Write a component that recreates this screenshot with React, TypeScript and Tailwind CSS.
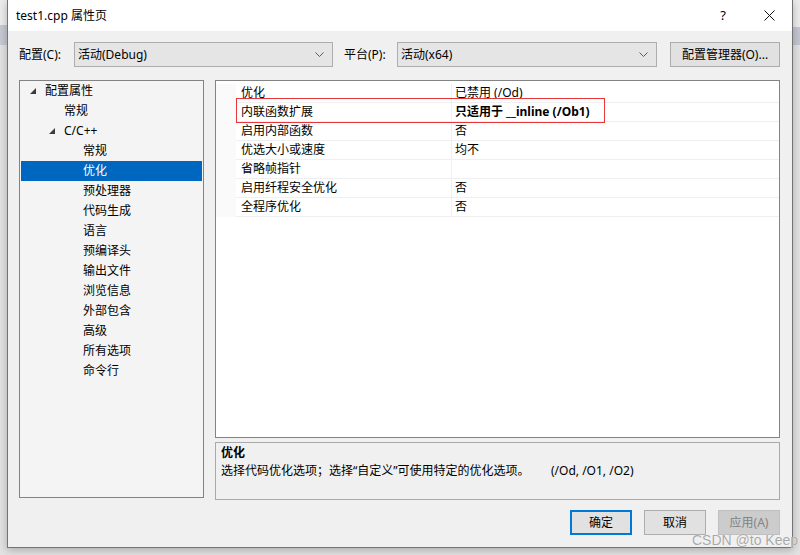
import React from 'react';

const treeItems = [
  { label: '配置属性', level: 0, arrow: true },
  { label: '常规', level: 1 },
  { label: 'C/C++', level: 1, arrow: true },
  { label: '常规', level: 2 },
  { label: '优化', level: 2, selected: true },
  { label: '预处理器', level: 2 },
  { label: '代码生成', level: 2 },
  { label: '语言', level: 2 },
  { label: '预编译头', level: 2 },
  { label: '输出文件', level: 2 },
  { label: '浏览信息', level: 2 },
  { label: '外部包含', level: 2 },
  { label: '高级', level: 2 },
  { label: '所有选项', level: 2 },
  { label: '命令行', level: 2 },
];

const props = [
  { name: '优化', value: '已禁用 (/Od)' },
  { name: '内联函数扩展', value: '只适用于 __inline (/Ob1)', bold: true },
  { name: '启用内部函数', value: '否' },
  { name: '优选大小或速度', value: '均不' },
  { name: '省略帧指针', value: '' },
  { name: '启用纤程安全优化', value: '否' },
  { name: '全程序优化', value: '否' },
];

function Expander() {
  return (
    <svg width="6" height="6" viewBox="0 0 6 6" className="shrink-0">
      <polygon points="6,0 6,6 0,6" fill="#3c3c3c" />
    </svg>
  );
}

function Chevron() {
  return (
    <svg width="9" height="5" viewBox="0 0 9 5">
      <path d="M0.5 0.5 L4.5 4.5 L8.5 0.5" fill="none" stroke="#5a5a5a" strokeWidth="1" />
    </svg>
  );
}

function Select({ text, width }: { text: string; width: string }) {
  return (
    <div className={`${width} h-[25px] border border-[#adadad] bg-[#e5e5e5] flex items-center justify-between pl-[3px] pr-[8px]`}>
      <span>{text}</span>
      <Chevron />
    </div>
  );
}

function TreeRow({ item }: { item: (typeof treeItems)[number] }) {
  let pad = 'pl-[62px]';
  if (item.level === 0) pad = item.arrow ? 'pl-[9px]' : 'pl-[24px]';
  if (item.level === 1) pad = item.arrow ? 'pl-[28px]' : 'pl-[43px]';
  return (
    <div
      className={`h-[20px] mx-[1px] flex items-center ${pad} ${
        item.selected ? 'bg-[#0067c0] text-white' : ''
      }`}
    >
      {item.arrow && (
        <span className="w-[15px] flex items-center">
          <Expander />
        </span>
      )}
      <span>{item.label}</span>
    </div>
  );
}

export default function App() {
  return (
    <div className="relative w-[800px] h-[555px] overflow-hidden bg-[#e2e2e2] text-[12px] text-black font-['Noto_Sans','Noto_Sans_CJK_SC',sans-serif]">
      {/* background window strips peeking out */}
      <div className="absolute left-0 top-0 w-[7px] h-[25px] bg-[#ececec]" />
      <div className="absolute left-0 top-[25px] w-[7px] h-[20px] bg-[#c6c9d2]" />
      <div className="absolute right-0 top-0 w-[7px] h-[27px] bg-[#ececec]" />
      <div className="absolute right-0 top-[27px] w-[7px] h-[18px] bg-[#c2c6d0]" />

      <div className="relative ml-[7px] w-[786px] h-[548px] border-x border-b border-[#747474] bg-[#f0f0f0] flex flex-col shadow-[0_2px_8px_rgba(0,0,0,0.25)]">
        {/* Title bar */}
        <div className="h-[31px] bg-white flex items-center pl-[8px]">
          <span className="flex-1">test1.cpp 属性页</span>
          <span className="w-[46px] text-center text-[13px]">?</span>
          <span className="w-[46px] flex justify-center">
            <svg width="11" height="11" viewBox="0 0 11 11">
              <path d="M0.5 0.5 L10.5 10.5 M10.5 0.5 L0.5 10.5" stroke="#111" strokeWidth="1" />
            </svg>
          </span>
        </div>

        <div className="flex flex-col px-[11px]">
          {/* Config row */}
          <div className="mt-[11px] h-[25px] flex items-center">
            <span className="w-[55px]">配置(C):</span>
            <Select text="活动(Debug)" width="w-[259px]" />
            <span className="ml-[11px] w-[53px]">平台(P):</span>
            <Select text="活动(x64)" width="w-[260px]" />
            <div className="ml-[13px] w-[110px] h-[25px] border border-[#adadad] bg-[#e1e1e1] flex items-center justify-center">
              配置管理器(O)...
            </div>
          </div>

          {/* Main */}
          <div className="mt-[13px] h-[420px] flex items-start">
            <div className="w-[185px] h-[418px] border border-[#838383] bg-[#f4f4f4]">
              {treeItems.map((it, i) => (
                <TreeRow key={i} item={it} />
              ))}
            </div>

            <div className="ml-[11px] w-[565px] flex flex-col">
              <div className="relative h-[358px] border border-[#838383] bg-white pt-[3px]">
                {props.map((p, i) => (
                  <div key={i} className="h-[19px] flex">
                    <div className="w-[20px] bg-[#fafafa]" />
                    <div className="w-[215px] pl-[5px] flex items-center border-b border-[#efefef]">{p.name}</div>
                    <div className="w-px bg-[#efefef]" />
                    <div className={`flex-1 pl-[3px] flex items-center border-b border-[#efefef] ${p.bold ? 'font-bold' : ''}`}>
                      {p.value}
                    </div>
                  </div>
                ))}
                <div className="absolute left-[20px] top-[17px] w-[369px] h-[25px] border border-[#e8353a]" />
              </div>

              <div className="mt-[4px] h-[58px] border border-[#a9a9a9] bg-[#f0f0f0] pl-[5px] pt-[1px] leading-[18px]">
                <div className="font-bold">优化</div>
                <div>
                  <span className="inline-block w-[330px]">选择代码优化选项；选择“自定义”可使用特定的优化选项。</span>
                  <span>(/Od, /O1, /O2)</span>
                </div>
              </div>
            </div>
          </div>

          {/* Buttons */}
          <div className="mt-[10px] flex justify-end gap-[12px] pr-[1px]">
            <div className="w-[62px] h-[25px] border-2 border-[#0078d7] bg-[#e1e1e1] flex items-center justify-center">确定</div>
            <div className="w-[62px] h-[25px] border border-[#adadad] bg-[#e1e1e1] flex items-center justify-center">取消</div>
            <div className="w-[62px] h-[25px] border border-[#bfbfbf] bg-[#cccccc] text-[#838383] flex items-center justify-center">应用(A)</div>
          </div>
        </div>
      </div>

      <div className="absolute left-[692px] top-[530px] whitespace-nowrap text-[14px] text-[#a9a9a9] font-['Liberation_Sans',sans-serif] [text-shadow:0_0_1px_#fff]">
        CSDN @to Keep
      </div>
    </div>
  );
}
